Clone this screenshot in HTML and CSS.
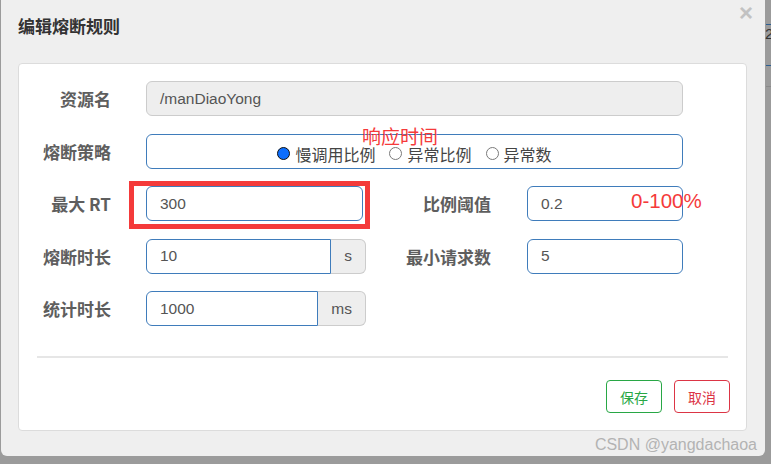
FILE: index.html
```html
<!DOCTYPE html>
<html lang="zh-CN">
<head>
    <meta charset="UTF-8">
    <title>编辑熔断规则</title>
    <link rel="stylesheet" href="styles.css">
</head>
<body>
<div class="screen">
    <div class="dialog">
        <div class="dialog-header">
            <div class="dialog-title">编辑熔断规则</div>
            <div class="dialog-close">&times;</div>
        </div>
        <div class="panel">
            <div class="row">
                <div class="label">资源名</div>
                <div class="control readonly">/manDiaoYong</div>
            </div>
            <div class="row">
                <div class="label">熔断策略</div>
                <div class="control radios">
                    <span class="radio checked"></span><span class="radio-text">慢调用比例</span>
                    <span class="radio"></span><span class="radio-text">异常比例</span>
                    <span class="radio"></span><span class="radio-text">异常数</span>
                    <span class="note note-rt">响应时间</span>
                </div>
            </div>
            <div class="row">
                <div class="label">最大 RT</div>
                <div class="half">
                    <div class="control rt">300<span class="mark"></span></div>
                </div>
                <div class="label label-right">比例阈值</div>
                <div class="control small">0.2<span class="note note-pct">0-100%</span></div>
            </div>
            <div class="row">
                <div class="label">熔断时长</div>
                <div class="half group">
                    <div class="control grouped">10</div>
                    <div class="addon">s</div>
                </div>
                <div class="label label-right">最小请求数</div>
                <div class="control small">5</div>
            </div>
            <div class="row">
                <div class="label">统计时长</div>
                <div class="half group">
                    <div class="control grouped">1000</div>
                    <div class="addon">ms</div>
                </div>
            </div>
            <div class="divider"></div>
            <div class="buttons">
                <button class="btn btn-save">保存</button>
                <button class="btn btn-cancel">取消</button>
            </div>
        </div>
        <div class="watermark">CSDN @yangdachaoa</div>
    </div>
    <div class="page-edge">
        <div class="edge-line blue"></div>
        <div class="edge-text">2</div>
        <div class="edge-line blue second"></div>
        <div class="edge-line grey"></div>
    </div>
</div>
</body>
</html>
```

FILE: styles.css
```css
body {
    margin: 0;
    background: #9b9b9b;
    font-family: "Noto Sans CJK SC", "Liberation Sans", sans-serif;
    width: 771px;
    height: 464px;
    overflow: hidden;
}

.screen {
    display: flex;
    height: 464px;
}

.dialog {
    margin-left: 1px;
    width: 764px;
    height: 456px;
    background: #efefef;
    border-radius: 0 0 6px 6px;
    flex: none;
}

.dialog-header {
    display: flex;
    justify-content: space-between;
    height: 63px;
    box-sizing: border-box;
    padding: 0 12px 0 17px;
}

.dialog-title {
    margin-top: 16px;
    font-size: 17px;
    line-height: 20px;
    font-weight: bold;
    color: #333;
}

.dialog-close {
    margin-top: 1px;
    font-family: "Liberation Sans", sans-serif;
    font-size: 24px;
    line-height: 24px;
    font-weight: bold;
    color: #c2c2c2;
}

.panel {
    margin: 0 18px 0 17px;
    background: #fff;
    border: 1px solid #dcdcdc;
    border-radius: 4px;
    padding: 17px 0 17px;
}

.row {
    display: flex;
    align-items: center;
    height: 35px;
    margin-bottom: 17.5px;
}

.row:nth-child(5) {
    margin-bottom: 0;
}

.label {
    flex: none;
    width: 92px;
    margin-right: 35px;
    text-align: right;
    font-size: 17px;
    font-weight: bold;
    color: #5e5e5e;
}

.label-right {
    width: 125px;
    margin-right: 36px;
}

.control {
    position: relative;
    flex: none;
    box-sizing: border-box;
    width: 537px;
    height: 35px;
    padding: 0 13px;
    display: flex;
    align-items: center;
    border: 1px solid #3f7cbb;
    border-radius: 6px;
    font-family: "Liberation Sans", "Noto Sans CJK SC", sans-serif;
    font-size: 15.5px;
    color: #555;
}

.control.readonly {
    background: #eee;
    border-color: #ccc;
}

.half {
    flex: none;
    width: 220px;
}

.control.rt {
    width: 217px;
}

.control.small {
    width: 156px;
}

.group {
    display: flex;
}

.control.grouped {
    flex: 1;
    width: auto;
    border-radius: 6px 0 0 6px;
}

.addon {
    box-sizing: border-box;
    height: 35px;
    padding: 0 13px;
    display: flex;
    align-items: center;
    background: #eee;
    border: 1px solid #ccc;
    border-left: none;
    border-radius: 0 6px 6px 0;
    font-family: "Liberation Sans", sans-serif;
    font-size: 15.5px;
    color: #555;
}

.radios {
    justify-content: center;
    padding: 5px 0 0 14px;
    font-family: "Noto Sans CJK SC", sans-serif;
    font-size: 16px;
    color: #444;
}

.radio {
    box-sizing: border-box;
    width: 13px;
    height: 13px;
    border: 1px solid #7a7a7a;
    border-radius: 50%;
    margin-right: 5px;
    background: #fff;
}

.radio.checked {
    border: 1.5px solid #111;
    background: #0d6efd;
}

.radio-text {
    margin-right: 14px;
}

.radio-text:last-of-type {
    margin-right: 0;
}

.note {
    position: absolute;
    font-family: "Noto Sans CJK SC", "Liberation Sans", sans-serif;
    color: #f53a3a;
    white-space: nowrap;
    line-height: 20px;
}

.note-rt {
    left: 215px;
    top: -9px;
    font-size: 19px;
}

.note-pct {
    left: 103px;
    top: 4px;
    font-family: "Liberation Sans", sans-serif;
    font-size: 20.5px;
}

.mark {
    position: absolute;
    left: -18px;
    top: -6px;
    width: 231px;
    height: 38px;
    border: 5px solid #f43a3a;
}

.divider {
    margin: 30px 18px 0;
    border-top: 2px solid #e6e6e6;
}

.buttons {
    display: flex;
    justify-content: flex-end;
    gap: 12px;
    margin-top: 22px;
    padding-right: 16px;
}

.btn {
    width: 56px;
    height: 33px;
    background: #fff;
    border: 1px solid;
    border-radius: 4px;
    font-family: "Noto Sans CJK SC", sans-serif;
    font-size: 14px;
    padding: 0;
}

.btn-save {
    color: #28a745;
    border-color: #28a745;
}

.btn-cancel {
    color: #dc3545;
    border-color: #dc3545;
}

.watermark {
    text-align: right;
    padding: 5px 8px 0 0;
    font-family: "Liberation Sans", sans-serif;
    font-size: 16px;
    line-height: 18px;
    color: #b3b3b3;
}

.page-edge {
    flex: 1;
    position: relative;
}

.edge-line {
    height: 1px;
    margin-left: 1px;
}

.edge-line.blue {
    background: #2d5f91;
    margin-top: 24px;
}

.edge-line.second {
    margin-top: 22px;
}

.edge-line.grey {
    background: #8a8a8a;
    margin-top: 20px;
}

.edge-text {
    font-family: "Liberation Sans", sans-serif;
    font-size: 15px;
    line-height: 18px;
    color: #333;
}
```
